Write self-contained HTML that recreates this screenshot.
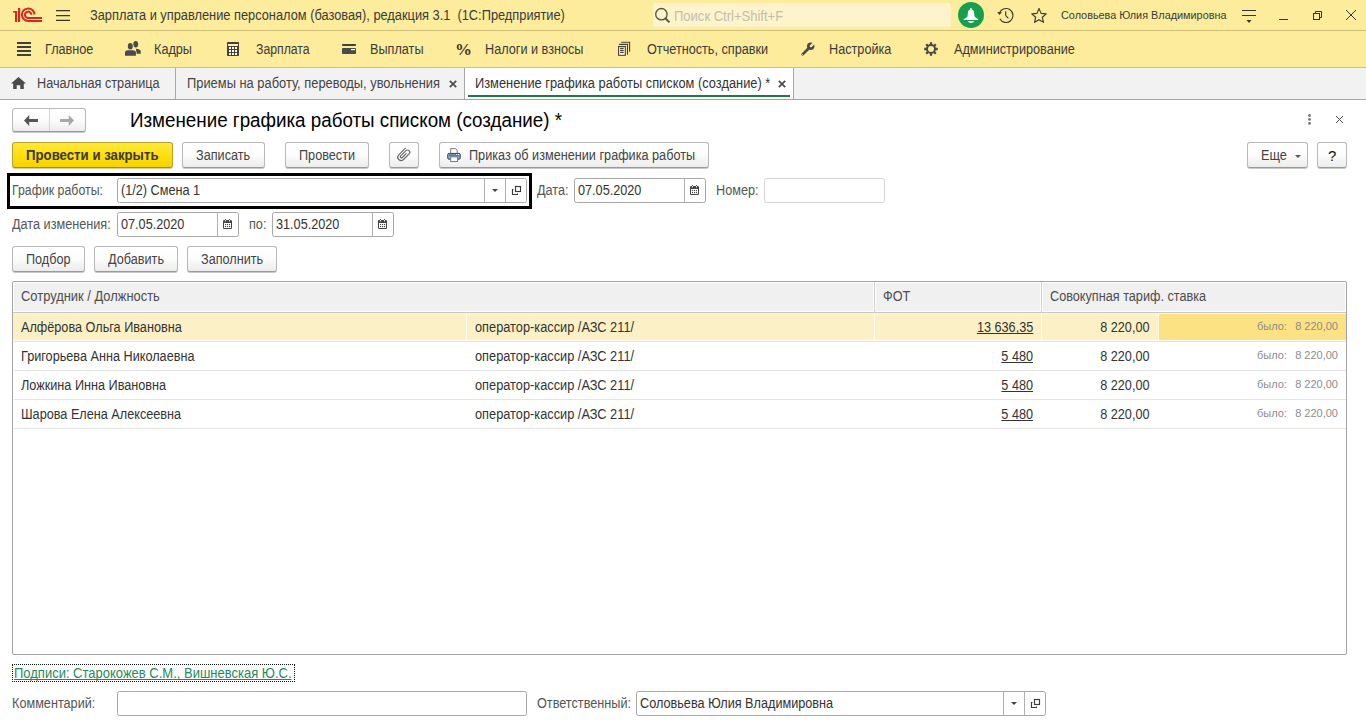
<!DOCTYPE html>
<html><head><meta charset="utf-8">
<style>
*{box-sizing:border-box;margin:0;padding:0}
html,body{width:1366px;height:728px;overflow:hidden;background:#fff;font-family:"Liberation Sans",sans-serif;font-size:13px;color:#4d4d4d}
.a{position:absolute}
.t{position:absolute;white-space:pre;line-height:15px;font-size:14px;margin-top:-1px;transform:scaleX(.905);transform-origin:0 0}
.t[style*="right:"]{transform-origin:100% 0}
.s11{font-size:11px;line-height:11px;letter-spacing:0;margin-top:0;transform:none}
.nt{transform:none;margin-top:0}
svg{position:absolute;overflow:visible}
/* bars */
#top{left:0;top:0;width:1366px;height:30px;background:#fdec9c}
#l30{left:0;top:30px;width:1366px;height:1px;background:#cdbf76}
#menu{left:0;top:31px;width:1366px;height:36px;background:#fdec9c}
#l67{left:0;top:67px;width:1366px;height:1px;background:#c9c08a}
#tabs{left:0;top:68px;width:1366px;height:31px;background:#f2f2f2}
#l99{left:0;top:99px;width:1366px;height:1px;background:#a3a3a3}
.btn{position:absolute;border:1px solid #b8b8b8;border-bottom-color:#9a9a9a;border-radius:3px;background:linear-gradient(#fff 0%,#fcfcfc 50%,#ececec 100%);box-shadow:0 1px 0 #c8c8c8}
.btnY{position:absolute;border:1px solid #b7a12a;border-bottom-color:#a08c22;border-radius:3px;background:linear-gradient(#ffe83a 0%,#fddf12 50%,#f5d200 100%);box-shadow:0 1px 0 #d9cf96}
.inp{position:absolute;border:1px solid #a8a8a8;border-radius:2.5px;background:#fff}
.vs{position:absolute;top:0;bottom:0;width:1px;background:#b0b0b0}
.tb{color:#333}
</style></head><body>
<!-- ============ TOP BAR ============ -->
<div id="top" class="a"></div><div id="l30" class="a"></div>
<div id="menu" class="a"></div><div id="l67" class="a"></div>
<div id="tabs" class="a"></div><div id="l99" class="a"></div>

<div class="t" style="left:90px;top:9px;color:#3b3b3b;transform:scaleX(.915)">Зарплата и управление персоналом (базовая), редакция 3.1  (1С:Предприятие)</div>


<!-- logo -->
<svg style="left:13px;top:8px" width="30" height="15" viewBox="0 0 30 15">
 <g fill="#d42a1e">
  <rect x="0" y="3" width="3" height="1.6"/>
  <rect x="2" y="3" width="2.2" height="11"/>
  <rect x="5" y="0" width="2.2" height="14"/>
 </g>
 <g fill="none" stroke="#d42a1e" stroke-width="2">
  <path d="M21.5 6.5 A6.3 6.3 0 1 0 15.5 13 H29"/>
  <path d="M18.3 6.8 A3.2 3.2 0 1 0 15.5 10 H29"/>
 </g>
</svg>
<!-- hamburger -->
<svg style="left:56px;top:10px" width="14" height="11" viewBox="0 0 14 11"><g stroke="#3a3520" stroke-width="1.2"><path d="M0 0.6H14M0 5.6H14M0 10.4H14"/></g></svg>
<!-- search -->
<div class="a" style="left:653px;top:3px;width:298px;height:24px;background:#fdf4cc;border-radius:3px"></div>
<svg style="left:654px;top:7px" width="18" height="17" viewBox="0 0 18 17"><circle cx="7.4" cy="7.2" r="5.7" fill="none" stroke="#5b5343" stroke-width="1.3"/><path d="M11.3 11.3L15.5 15.4" stroke="#5b5343" stroke-width="2"/></svg>
<div class="t" style="left:674px;top:10px;color:#c4bdae;transform:scaleX(.93)">Поиск Ctrl+Shift+F</div>
<!-- bell -->
<svg style="left:958px;top:2px" width="26" height="26" viewBox="0 0 26 26"><circle cx="13" cy="13" r="13" fill="#17a04b"/>
 <path d="M13 6C13.6 6 13.9 6.5 13.9 7.4C15.5 7.8 16 9.2 16.1 11L16.6 14.8L20.2 17.2V18H5.8V17.2L9.4 14.8L9.9 11C10 9.2 10.5 7.8 12.1 7.4C12.1 6.5 12.4 6 13 6z" fill="#fff"/>
 <path d="M9.9 19H16.1C15.6 20.4 14.5 20.9 13 20.9S10.4 20.4 9.9 19z" fill="#fff"/></svg>
<!-- history -->
<svg style="left:996px;top:7px" width="18" height="17" viewBox="0 0 18 17">
 <path d="M3.51 5.88A7 7 0 1 1 3.82 11.79" fill="none" stroke="#3d3a2b" stroke-width="1.15"/>
 <path d="M1.2 5.1L6 5.3L3.4 8.1z" fill="#3d3a2b"/>
 <path d="M9.7 4.2V8.6L12.4 11.3" fill="none" stroke="#3d3a2b" stroke-width="1.15"/></svg>
<!-- star -->
<svg style="left:1031px;top:7px" width="17" height="17" viewBox="0 0 17 17"><path d="M8.00 1.60 L10.06 6.37 L15.23 6.85 L11.33 10.28 L12.47 15.35 L8.00 12.70 L3.53 15.35 L4.67 10.28 L0.77 6.85 L5.94 6.37z" fill="none" stroke="#3d3a2b" stroke-width="1.15" stroke-linejoin="round"/></svg>
<div class="t s11" style="left:1061px;top:10px;color:#3b3b3b;transform:scaleX(.987);transform-origin:0 0">Соловьева Юлия Владимировна</div>
<!-- menu lines icon -->
<svg style="left:1242px;top:9px" width="14" height="15" viewBox="0 0 14 15"><path d="M0 1.5H14M0 6.5H14" stroke="#333" stroke-width="1.1"/><path d="M4.5 11H9.5L7 14z" fill="#333"/></svg>
<!-- minimize -->
<div class="a" style="left:1279px;top:19px;width:9px;height:1px;background:#333"></div>
<!-- restore -->
<svg style="left:1312px;top:10px" width="12" height="12" viewBox="0 0 12 12"><path d="M3.5 3.5V1.5H9.5V7.5H7.5" fill="none" stroke="#333" stroke-width="1"/><rect x="1.5" y="3.5" width="6" height="6" fill="none" stroke="#333" stroke-width="1"/></svg>
<!-- close -->
<svg style="left:1346px;top:10px" width="10" height="10" viewBox="0 0 10 10"><path d="M0 0L10 10M10 0L0 10" stroke="#333" stroke-width="1"/></svg>

<!-- ============ MENU ============ -->
<svg style="left:17px;top:42px" width="14" height="14" viewBox="0 0 14 14"><path d="M0 1H14M0 5H14M0 9H14M0 13H14" stroke="#3f3f3f" stroke-width="2"/></svg>
<div class="t" style="left:45px;top:43px;color:#3b3b3b">Главное</div>
<svg style="left:120px;top:36px" width="30" height="24" viewBox="0 0 30 24" fill="#4a4a4a">
 <ellipse cx="15.7" cy="8.2" rx="2.4" ry="3.25"/><path d="M15.8 12.8Q20.8 13.2 20.8 15.8V17.8H16V13.2z"/>
 <g stroke="#fdec9c" stroke-width="1.4" fill="#fdec9c"><ellipse cx="10.3" cy="10.3" rx="2.45" ry="3.25"/><path d="M5 19.8V16.6Q5 14.5 8 14.3H12.6Q15.9 14.5 15.9 16.6V19.8z"/></g><ellipse cx="10.3" cy="10.3" rx="2.45" ry="3.25"/><path d="M5 19.8V16.6Q5 14.5 8 14.3H12.6Q15.9 14.5 15.9 16.6V19.8z"/></svg>
<div class="t" style="left:154px;top:43px;color:#3b3b3b">Кадры</div>
<svg style="left:227px;top:42px" width="12" height="14" viewBox="0 0 12 14"><rect x="0" y="0" width="12" height="14" rx="0.8" fill="#45413a"/><rect x="1" y="2" width="10" height="2" fill="#fdf0b0"/><g fill="#fffbea"><rect x="2" y="5" width="2" height="2"/><rect x="5" y="5" width="2" height="2"/><rect x="8" y="5" width="2" height="2"/><rect x="2" y="8" width="2" height="2"/><rect x="5" y="8" width="2" height="2"/><rect x="8" y="8" width="2" height="2"/><rect x="2" y="11" width="2" height="2"/><rect x="5" y="11" width="2" height="2"/><rect x="8" y="11" width="2" height="2"/></g></svg>
<div class="t" style="left:256px;top:43px;color:#3b3b3b;transform:scaleX(.875)">Зарплата</div>
<svg style="left:342px;top:44px" width="14" height="10" viewBox="0 0 14 10"><rect x="0" y="0" width="14" height="2" rx="0.8" fill="#45413a"/><rect x="0" y="4" width="14" height="6" rx="0.8" fill="#4a4a4a"/><rect x="9" y="5" width="4" height="1.2" fill="#fffbea"/></svg>
<div class="t" style="left:370px;top:43px;color:#3b3b3b">Выплаты</div>
<div class="t nt" style="left:455px;top:41px;font-family:'Liberation Serif',serif;font-size:17px;line-height:17px;font-weight:bold;color:#3f3c2c">%</div>
<div class="t" style="left:485px;top:43px;color:#3b3b3b">Налоги и взносы</div>
<svg style="left:612px;top:36px" width="24" height="24" viewBox="0 0 24 24" fill="none" stroke="#45413a" stroke-width="1.1"><path d="M9.2 6.3H17.6V15.8"/><path d="M7.1 8.4H15.5V18.8"/><rect x="6.6" y="10.5" width="6.7" height="8.8" fill="#fffbe6"/><path d="M8.1 12.4H11.7M8.1 14.4H11.7M8.1 16.4H11.7"/></svg>
<div class="t" style="left:647px;top:43px;color:#3b3b3b">Отчетность, справки</div>
<svg style="left:796px;top:38px" width="24" height="22" viewBox="0 0 24 22">
 <path d="M6.6 16.4L12.3 10.7" stroke="#4a4a4a" stroke-width="2.7" stroke-linecap="round"/>
 <circle cx="14.7" cy="8.3" r="3.7" fill="#4a4a4a"/>
 <path d="M14.9 8.1L19.5 3.5" stroke="#fdec9c" stroke-width="2.3" stroke-linecap="round"/>
 <circle cx="6.5" cy="16.5" r="0.55" fill="#fdec9c"/></svg>
<div class="t" style="left:829px;top:43px;color:#3b3b3b">Настройка</div>
<svg style="left:924px;top:42px" width="14" height="14" viewBox="0 0 14 14">
 <g stroke="#4a4a4a" stroke-width="2.3"><path d="M7 0.2V13.8M0.2 7H13.8M2.2 2.2L11.8 11.8M11.8 2.2L2.2 11.8"/></g>
 <circle cx="7" cy="7" r="5" fill="#4a4a4a"/><circle cx="7" cy="7" r="3" fill="#fdec9c"/></svg>
<div class="t" style="left:954px;top:43px;color:#3b3b3b">Администрирование</div>

<!-- ============ TABS ============ -->
<svg style="left:11px;top:77px" width="15" height="12" viewBox="0 0 15 12" fill="#4a4a4a"><path d="M7.5 0L15 6.5H12.8V12H9.3V8.2H5.7V12H2.2V6.5H0z"/></svg>
<div class="t" style="left:37px;top:77px;color:#444">Начальная страница</div>
<div class="a" style="left:175px;top:68px;width:1px;height:31px;background:#a8a8a8"></div>
<div class="t" style="left:187px;top:77px;color:#444;transform:scaleX(.92)">Приемы на работу, переводы, увольнения</div>
<svg style="left:449px;top:80px" width="8" height="8" viewBox="0 0 8 8"><path d="M.8 .8L7.2 7.2M7.2 .8L.8 7.2" stroke="#505050" stroke-width="1.8"/></svg>
<div class="a" style="left:464px;top:68px;width:1px;height:31px;background:#a8a8a8"></div>
<div class="a" style="left:465px;top:68px;width:328px;height:31px;background:#fff"></div>
<div class="t" style="left:475px;top:77px;color:#333;transform:scaleX(.917)">Изменение графика работы списком (создание) *</div>
<svg style="left:778px;top:80px" width="8" height="8" viewBox="0 0 8 8"><path d="M.8 .8L7.2 7.2M7.2 .8L.8 7.2" stroke="#505050" stroke-width="1.8"/></svg>
<div class="a" style="left:468px;top:95px;width:322px;height:2px;background:#1f7a48"></div>
<div class="a" style="left:793px;top:68px;width:1px;height:31px;background:#a8a8a8"></div>


<!-- ============ FORM HEADER ============ -->
<div class="btn" style="left:12px;top:108px;width:74px;height:24px"></div>
<div class="a" style="left:49px;top:109px;width:1px;height:22px;background:#d4d4d4"></div>
<svg style="left:24px;top:115px" width="14" height="11" viewBox="0 0 14 11"><path d="M0 5.5L5.2 0V3.9H14V7.1H5.2V11z" fill="#555"/></svg>
<svg style="left:60px;top:115px" width="14" height="11" viewBox="0 0 14 11"><path d="M14 5.5L8.8 0V3.9H0V7.1H8.8V11z" fill="#a8a8a8"/></svg>
<div class="t" style="left:130px;top:111px;font-size:20px;line-height:20px;color:#000;transform:scaleX(.939)">Изменение графика работы списком (создание) *</div>
<svg style="left:1308px;top:114px" width="3" height="11" viewBox="0 0 3 11" fill="#777"><circle cx="1.5" cy="1.5" r="1.4"/><circle cx="1.5" cy="5.4" r="1.4"/><circle cx="1.5" cy="9.4" r="1.4"/></svg>
<svg style="left:1336px;top:116px" width="7" height="7" viewBox="0 0 7 7"><path d="M0 0L7 7M7 0L0 7" stroke="#444" stroke-width="1"/></svg>

<!-- command bar -->
<div class="btnY" style="left:12px;top:142px;width:161px;height:26px"></div>
<div class="t" style="left:26px;top:149px;font-weight:bold;color:#3d3a22;transform:scaleX(.944)">Провести и закрыть</div>
<div class="btn" style="left:182px;top:142px;width:83px;height:26px"></div>
<div class="t" style="left:196px;top:149px;color:#444">Записать</div>
<div class="btn" style="left:285px;top:142px;width:84px;height:26px"></div>
<div class="t" style="left:299px;top:149px;color:#444">Провести</div>
<div class="btn" style="left:389px;top:142px;width:30px;height:26px"></div>
<svg style="left:394px;top:144px" width="20" height="20" viewBox="0 0 20 20"><path d="M11.65 3.95L4.8 10.8A3.32 3.32 0 0 0 9.5 15.5L15.15 9.85A2.26 2.26 0 0 0 11.95 6.65L6.7 11.9A1.13 1.13 0 0 0 8.3 13.5L12.4 9.4" fill="none" stroke="#6a6a6a" stroke-width="1.2"/></svg>
<div class="btn" style="left:439px;top:142px;width:270px;height:26px"></div>
<svg style="left:444px;top:144px" width="20" height="20" viewBox="0 0 20 20">
 <path d="M6.7 4.6H11.6L13.1 6.3V9.5H6.7z" fill="#fff" stroke="#7a7a7a" stroke-width="1"/>
 <rect x="3.7" y="9.4" width="12.6" height="5.8" rx="1.3" fill="#86a8c9" stroke="#2f4d6c" stroke-width="1"/>
 <path d="M5 11.2H14.8" stroke="#35587a" stroke-width="0.9"/>
 <rect x="12" y="10" width="1.1" height="0.9" fill="#fff"/><rect x="13.9" y="10" width="1.1" height="0.9" fill="#fff"/>
 <rect x="6.7" y="12.9" width="6.9" height="4.6" fill="#fff" stroke="#7a7a7a" stroke-width="1"/></svg>
<div class="t" style="left:469px;top:149px;color:#444">Приказ об изменении графика работы</div>
<div class="btn" style="left:1247px;top:142px;width:61px;height:26px"></div>
<div class="t" style="left:1261px;top:149px;color:#444">Еще</div>
<svg style="left:1295px;top:155px" width="6" height="3" viewBox="0 0 6 3"><path d="M0 0H6L3 3z" fill="#555"/></svg>
<div class="btn" style="left:1317px;top:142px;width:30px;height:26px"></div>
<div class="t nt" style="left:1328px;top:148px;font-size:15px;line-height:15px;color:#111">?</div>

<!-- row 1 fields -->
<div class="a" style="left:7px;top:173px;width:525px;height:36px;border:3px solid #000"></div>
<div class="t" style="left:12px;top:184px;color:#555;transform:scaleX(.882)">График работы:</div>
<div class="inp" style="left:117px;top:178px;width:410px;height:25px">
 <div class="vs" style="left:366px"></div><div class="vs" style="left:387px"></div></div>
<div class="t tb" style="left:121px;top:184px">(1/2) Смена 1</div>
<svg style="left:492px;top:189px" width="6" height="3" viewBox="0 0 6 3"><path d="M0 0H6L3 3z" fill="#444"/></svg>
<svg style="left:511px;top:185px" width="11" height="11" viewBox="0 0 11 11" fill="none" stroke="#3a3a3a" stroke-width="1.15"><rect x="4.5" y="1.5" width="5" height="5"/><path d="M2.5 4.5H1.5V9.5H6.5V8.5"/></svg>
<div class="t" style="left:537px;top:184px;color:#555">Дата:</div>
<div class="inp" style="left:574px;top:178px;width:132px;height:25px"><div class="vs" style="left:109px"></div></div>
<div class="t tb" style="left:578px;top:184px">07.05.2020</div>
<svg style="left:689px;top:184px" width="11" height="12" viewBox="0 0 11 12"><rect x="1" y="2" width="9" height="9" rx="1.2" fill="#454545"/><rect x="2" y="5" width="7" height="5" fill="#fff"/><rect x="3" y="1" width="1" height="1" fill="#454545"/><rect x="7" y="1" width="1" height="1" fill="#454545"/><rect x="3" y="2" width="1" height="1.4" fill="#fff"/><rect x="7" y="2" width="1" height="1.4" fill="#fff"/><g fill="#454545"><rect x="3" y="6" width="1.1" height="1.1"/><rect x="5" y="6" width="1.1" height="1.1"/><rect x="7" y="6" width="1.1" height="1.1"/><rect x="3" y="8" width="1.1" height="1.1"/><rect x="5" y="8" width="1.1" height="1.1"/><rect x="7" y="8" width="1.1" height="1.1"/></g></svg>
<div class="t" style="left:716px;top:184px;color:#555">Номер:</div>
<div class="inp" style="left:764px;top:178px;width:121px;height:25px;border-color:#d5d5d5"></div>

<!-- row 2 -->
<div class="t" style="left:12px;top:218px;color:#555">Дата изменения:</div>
<div class="inp" style="left:117px;top:212px;width:122px;height:25px"><div class="vs" style="left:99px"></div></div>
<div class="t tb" style="left:121px;top:218px">07.05.2020</div>
<svg style="left:222px;top:218px" width="11" height="12" viewBox="0 0 11 12"><rect x="1" y="2" width="9" height="9" rx="1.2" fill="#454545"/><rect x="2" y="5" width="7" height="5" fill="#fff"/><rect x="3" y="1" width="1" height="1" fill="#454545"/><rect x="7" y="1" width="1" height="1" fill="#454545"/><rect x="3" y="2" width="1" height="1.4" fill="#fff"/><rect x="7" y="2" width="1" height="1.4" fill="#fff"/><g fill="#454545"><rect x="3" y="6" width="1.1" height="1.1"/><rect x="5" y="6" width="1.1" height="1.1"/><rect x="7" y="6" width="1.1" height="1.1"/><rect x="3" y="8" width="1.1" height="1.1"/><rect x="5" y="8" width="1.1" height="1.1"/><rect x="7" y="8" width="1.1" height="1.1"/></g></svg>
<div class="t" style="left:249px;top:218px;color:#555">по:</div>
<div class="inp" style="left:272px;top:212px;width:122px;height:25px"><div class="vs" style="left:99px"></div></div>
<div class="t tb" style="left:276px;top:218px">31.05.2020</div>
<svg style="left:377px;top:218px" width="11" height="12" viewBox="0 0 11 12"><rect x="1" y="2" width="9" height="9" rx="1.2" fill="#454545"/><rect x="2" y="5" width="7" height="5" fill="#fff"/><rect x="3" y="1" width="1" height="1" fill="#454545"/><rect x="7" y="1" width="1" height="1" fill="#454545"/><rect x="3" y="2" width="1" height="1.4" fill="#fff"/><rect x="7" y="2" width="1" height="1.4" fill="#fff"/><g fill="#454545"><rect x="3" y="6" width="1.1" height="1.1"/><rect x="5" y="6" width="1.1" height="1.1"/><rect x="7" y="6" width="1.1" height="1.1"/><rect x="3" y="8" width="1.1" height="1.1"/><rect x="5" y="8" width="1.1" height="1.1"/><rect x="7" y="8" width="1.1" height="1.1"/></g></svg>

<!-- row 3 buttons -->
<div class="btn" style="left:12px;top:246px;width:73px;height:26px"></div>
<div class="t" style="left:26px;top:253px;color:#444">Подбор</div>
<div class="btn" style="left:94px;top:246px;width:84px;height:26px"></div>
<div class="t" style="left:108px;top:253px;color:#444">Добавить</div>
<div class="btn" style="left:187px;top:246px;width:90px;height:26px"></div>
<div class="t" style="left:201px;top:253px;color:#444">Заполнить</div>


<!-- ============ TABLE ============ -->
<div class="a" style="left:12px;top:281px;width:1335px;height:374px;border:1px solid #a3a3a3;border-radius:2px;background:#fff"></div>
<div class="a" style="left:14px;top:283px;width:859px;height:28px;background:#f0f0f0"></div>
<div class="a" style="left:874px;top:282px;width:1px;height:30px;background:#cfcfcf"></div>
<div class="a" style="left:876px;top:283px;width:164px;height:28px;background:#f0f0f0"></div>
<div class="a" style="left:1041px;top:282px;width:1px;height:30px;background:#cfcfcf"></div>
<div class="a" style="left:1043px;top:283px;width:302px;height:28px;background:#f0f0f0"></div>
<div class="a" style="left:13px;top:312px;width:1333px;height:1px;background:#c8c8c8"></div>
<div class="t" style="left:21px;top:290px;color:#4d4d4d;transform:scaleX(.922)">Сотрудник / Должность</div>
<div class="t" style="left:883px;top:290px;color:#4d4d4d">ФОТ</div>
<div class="t" style="left:1050px;top:290px;color:#4d4d4d">Совокупная тариф. ставка</div>
<!-- selected row -->
<div class="a" style="left:13px;top:313px;width:1333px;height:28px;background:#fcf1c6;border-top:1px solid #fbf5dc;border-bottom:1px solid #fffcef"></div>
<div class="a" style="left:1159px;top:314px;width:187px;height:26px;background:#fde283"></div>
<div class="a" style="left:14px;top:341px;width:1332px;height:1px;background:#e3e3e3"></div>
<div class="a" style="left:466px;top:314px;width:1px;height:26px;background:#fffbea"></div>
<div class="a" style="left:874px;top:314px;width:1px;height:26px;background:#fffbea"></div>
<div class="a" style="left:1041px;top:314px;width:1px;height:26px;background:#fffbea"></div>
<div class="a" style="left:1158px;top:314px;width:1px;height:26px;background:#fffbea"></div>
<div class="t tb" style="left:21px;top:321px">Алфёрова Ольга Ивановна</div>
<div class="t tb" style="left:475px;top:321px;transform:scaleX(.913)">оператор-кассир /АЗС 211/</div>
<div class="t tb" style="right:333px;top:321px;text-decoration:underline;text-decoration-skip-ink:none">13 636,35</div>
<div class="t tb" style="right:217px;top:321px">8 220,00</div>
<div class="t s11" style="left:1257px;top:321px;color:#8c8c8c">было:</div>
<div class="t s11" style="right:28px;top:321px;color:#8c8c8c">8 220,00</div>
<div class="a" style="left:14px;top:370px;width:1332px;height:1px;background:#e3e3e3"></div>
<div class="t tb" style="left:21px;top:350px">Григорьева Анна Николаевна</div>
<div class="t tb" style="left:475px;top:350px;transform:scaleX(.913)">оператор-кассир /АЗС 211/</div>
<div class="t tb" style="right:333px;top:350px;text-decoration:underline;text-decoration-skip-ink:none">5 480</div>
<div class="t tb" style="right:217px;top:350px">8 220,00</div>
<div class="t s11" style="left:1257px;top:350px;color:#8c8c8c">было:</div>
<div class="t s11" style="right:28px;top:350px;color:#8c8c8c">8 220,00</div>
<div class="a" style="left:14px;top:399px;width:1332px;height:1px;background:#e3e3e3"></div>
<div class="t tb" style="left:21px;top:379px">Ложкина Инна Ивановна</div>
<div class="t tb" style="left:475px;top:379px;transform:scaleX(.913)">оператор-кассир /АЗС 211/</div>
<div class="t tb" style="right:333px;top:379px;text-decoration:underline;text-decoration-skip-ink:none">5 480</div>
<div class="t tb" style="right:217px;top:379px">8 220,00</div>
<div class="t s11" style="left:1257px;top:379px;color:#8c8c8c">было:</div>
<div class="t s11" style="right:28px;top:379px;color:#8c8c8c">8 220,00</div>
<div class="a" style="left:14px;top:428px;width:1332px;height:1px;background:#e3e3e3"></div>
<div class="t tb" style="left:21px;top:408px">Шарова Елена Алексеевна</div>
<div class="t tb" style="left:475px;top:408px;transform:scaleX(.913)">оператор-кассир /АЗС 211/</div>
<div class="t tb" style="right:333px;top:408px;text-decoration:underline;text-decoration-skip-ink:none">5 480</div>
<div class="t tb" style="right:217px;top:408px">8 220,00</div>
<div class="t s11" style="left:1257px;top:408px;color:#8c8c8c">было:</div>
<div class="t s11" style="right:28px;top:408px;color:#8c8c8c">8 220,00</div>

<!-- ============ BOTTOM ============ -->
<div class="a" style="left:12px;top:664px;width:283px;height:18px;border:1px dotted #111"></div>
<div class="t" style="left:14px;top:667px;color:#1f8a59;text-decoration:underline;text-decoration-skip-ink:none;transform:scaleX(.928)">Подписи: Старокожев С.М., Вишневская Ю.С.</div>
<div class="t" style="left:12px;top:697px;color:#555">Комментарий:</div>
<div class="inp" style="left:117px;top:691px;width:410px;height:25px"></div>
<div class="t" style="left:537px;top:697px;color:#555">Ответственный:</div>
<div class="inp" style="left:636px;top:691px;width:410px;height:25px"><div class="vs" style="left:366px"></div><div class="vs" style="left:387px"></div></div>
<div class="t tb" style="left:640px;top:697px">Соловьева Юлия Владимировна</div>
<svg style="left:1011px;top:702px" width="6" height="3" viewBox="0 0 6 3"><path d="M0 0H6L3 3z" fill="#444"/></svg>
<svg style="left:1030px;top:698px" width="11" height="11" viewBox="0 0 11 11" fill="none" stroke="#3a3a3a" stroke-width="1.15"><rect x="4.5" y="1.5" width="5" height="5"/><path d="M2.5 4.5H1.5V9.5H6.5V8.5"/></svg>

</body></html>
